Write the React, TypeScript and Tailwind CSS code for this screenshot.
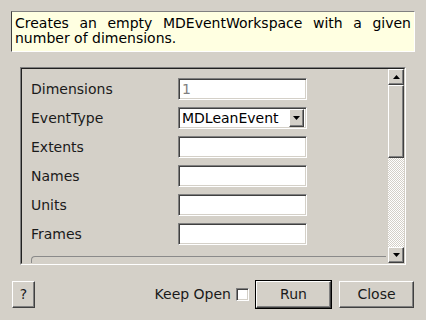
import React from 'react';

const FIELDS = ['Dimensions', 'EventType', 'Extents', 'Names', 'Units', 'Frames'];

// classic sunken / raised bevels
const sunken =
  'border border-t-[#808080] border-l-[#808080] border-b-white border-r-white shadow-[inset_1px_1px_0_#404040,inset_-1px_-1px_0_#d4d0c8]';
const raised =
  'border border-t-white border-l-white border-b-[#404040] border-r-[#404040] shadow-[inset_-1px_-1px_0_#808080]';

function Arrow({ up }: { up?: boolean }) {
  return (
    <svg width="7" height="4" viewBox="0 0 7 4">
      {up ? <path d="M3.5 0 L7 4 L0 4 Z" fill="#000" /> : <path d="M0 0 L7 0 L3.5 4 Z" fill="#000" />}
    </svg>
  );
}

function Field({ name }: { name: string }) {
  if (name === 'Dimensions') {
    return (
      <div className={`w-[129px] h-[22px] bg-white ${sunken} flex items-center pl-[3px] text-[#808080]`}>1</div>
    );
  }
  if (name === 'EventType') {
    return (
      <div className={`w-[129px] h-[22px] bg-white ${sunken} flex items-center p-[2px]`}>
        <span className="flex-1 pl-[1px] text-black">MDLeanEvent</span>
        <div className={`w-[15px] h-[18px] bg-[#d4d0c8] ${raised} flex items-center justify-center`}>
          <Arrow />
        </div>
      </div>
    );
  }
  return <div className={`w-[129px] h-[22px] bg-white ${sunken}`} />;
}

export default function App() {
  return (
    <div className="w-[426px] h-[320px] bg-[#d4d0c8] flex flex-col text-[14px] text-black font-['DejaVu_Sans',sans-serif] overflow-hidden">
      {/* description */}
      <div className="mt-[11px] mx-[11px] h-[41px] bg-[#ffffe1] border border-t-[#808080] border-l-[#404040] border-b-white border-r-white px-[3px] pt-[4px] leading-[15px] text-justify">
        Creates an empty MDEventWorkspace with a given number of dimensions.
      </div>

      {/* property scroll area */}
      <div className="mt-[15px] ml-[20px] w-[386px] h-[198px] border border-t-[#808080] border-l-[#808080] border-b-white border-r-white">
        <div className="w-full h-full flex border border-t-[#202020] border-l-[#202020] border-b-[#d4d0c8] border-r-[#d4d0c8]">
          <div className="flex-1 overflow-hidden pt-[9px] pl-[9px]">
            <div className="flex flex-col gap-[7px]">
              {FIELDS.map((f) => (
                <div key={f} className="flex items-center h-[22px]">
                  <span className="w-[147px] leading-[22px] text-[#1a1a1a]">{f}</span>
                  <Field name={f} />
                </div>
              ))}
            </div>
            <div className="mt-[11px] mr-[2px] h-[40px] border-t border-l border-[#8a8a8a] rounded-tl-[4px]">
              <div className="pt-[5px] text-center font-bold leading-[15px] pr-[40px]">Additional Properties</div>
            </div>
          </div>
          <div className="w-[16px] flex flex-col">
            <div className={`h-[16px] bg-[#d4d0c8] ${raised} flex items-center justify-center`}>
              <Arrow up />
            </div>
            <div className={`h-[73px] bg-[#d4d0c8] ${raised}`} />
            <div className="flex-1 bg-[repeating-conic-gradient(#ffffff_0_25%,#d4d0c8_0_50%)] bg-[length:2px_2px]" />
            <div className={`h-[16px] bg-[#d4d0c8] ${raised} flex items-center justify-center`}>
              <Arrow />
            </div>
          </div>
        </div>
      </div>

      {/* buttons */}
      <div className="mt-[15px] flex items-center pl-[12px] pr-[12px] h-[29px]">
        <button className={`w-[23px] h-[27px] ${raised} flex items-center justify-center text-[#1a1a1a]`}>?</button>
        <div className="flex-1" />
        <span className="text-[#1a1a1a]">Keep Open</span>
        <div className={`ml-[5px] w-[13px] h-[13px] bg-white ${sunken}`} />
        <button className="ml-[6px] w-[77px] h-[29px] border border-black">
          <div className={`w-full h-full ${raised} flex items-center justify-center text-[#1a1a1a]`}>Run</div>
        </button>
        <button className={`ml-[7px] w-[75px] h-[27px] ${raised} flex items-center justify-center text-[#1a1a1a]`}>Close</button>
      </div>
    </div>
  );
}
